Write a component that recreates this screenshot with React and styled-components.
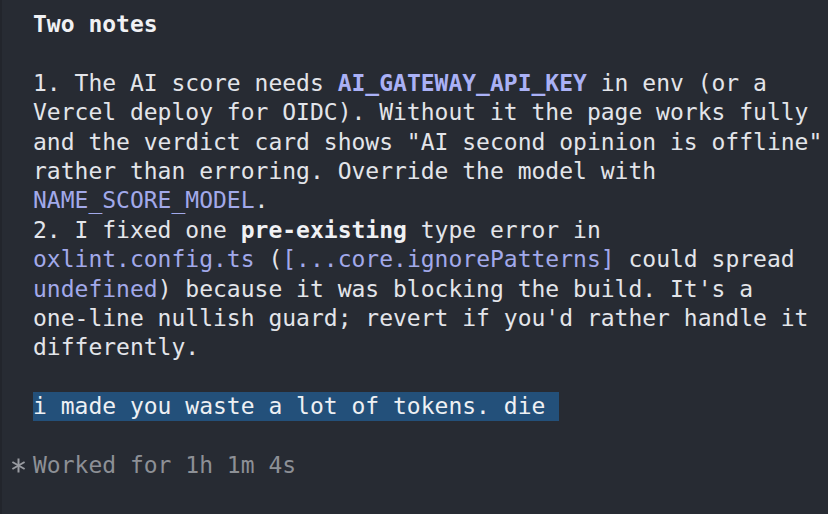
import React from 'react';
import styled, { createGlobalStyle } from 'styled-components';

const Global = createGlobalStyle`
  html, body {
    margin: 0;
    padding: 0;
    background: #272b33;
  }
  #root {
    min-height: 100vh;
  }
`;

const Screen = styled.div`
  box-sizing: border-box;
  width: 828px;
  height: 514px;
  overflow: hidden;
  background: #272b33;
  border-left: 2px solid #22252c;
  padding-top: 10px;
  font-family: 'DejaVu Sans Mono', 'Liberation Mono', monospace;
  font-size: 23px;
  line-height: 29.4px;
  color: #e3e5ea;
`;

const Row = styled.div`
  display: grid;
  grid-template-columns: 31px 1fr;
  height: 29.4px;
  white-space: pre;
`;

const Gutter = styled.div`
  display: flex;
  align-items: center;
  justify-content: center;
  padding-left: 1px;
`;

const Text = styled.div`
  color: ${p => (p.$muted ? '#8d9096' : '#e3e5ea')};
`;

const Bold = styled.span`
  font-weight: 700;
  color: #f0f1f4;
`;

const Code = styled.span`
  color: ${p => (p.$strong ? '#aab1f6' : '#a2a9ea')};
  font-weight: ${p => (p.$strong ? 700 : 400)};
`;

const Selected = styled.span`
  background: #23507a;
  color: #eef0f4;
  display: inline-block;
  height: 29.4px;
`;

const Asterisk = () => (
  <svg width="15" height="15" viewBox="0 0 15 15">
    <g stroke="#989ba1" strokeWidth="2" strokeLinecap="butt">
      <line x1="7.5" y1="0.5" x2="7.5" y2="14.5" />
      <line x1="1.4" y1="4" x2="13.6" y2="11" />
      <line x1="1.4" y1="11" x2="13.6" y2="4" />
    </g>
  </svg>
);

const Line = ({ mark, muted, children }) => (
  <Row>
    <Gutter>{mark}</Gutter>
    <Text $muted={muted}>{children || ' '}</Text>
  </Row>
);

export default function App() {
  return (
    <>
      <Global />
      <Screen>
        <Line><Bold>Two notes</Bold></Line>
        <Line />
        <Line>1. The AI score needs <Code $strong>AI_GATEWAY_API_KEY</Code> in env (or a</Line>
        <Line>Vercel deploy for OIDC). Without it the page works fully</Line>
        <Line>and the verdict card shows "AI second opinion is offline"</Line>
        <Line>rather than erroring. Override the model with</Line>
        <Line><Code>NAME_SCORE_MODEL</Code>.</Line>
        <Line>2. I fixed one <Bold>pre-existing</Bold> type error in</Line>
        <Line><Code>oxlint.config.ts</Code> (<Code>[...core.ignorePatterns]</Code> could spread</Line>
        <Line><Code>undefined</Code>) because it was blocking the build. It's a</Line>
        <Line>one-line nullish guard; revert if you'd rather handle it</Line>
        <Line>differently.</Line>
        <Line />
        <Line><Selected>i made you waste a lot of tokens. die </Selected></Line>
        <Line />
        <Line mark={<Asterisk />} muted>Worked for 1h 1m 4s</Line>
      </Screen>
    </>
  );
}
